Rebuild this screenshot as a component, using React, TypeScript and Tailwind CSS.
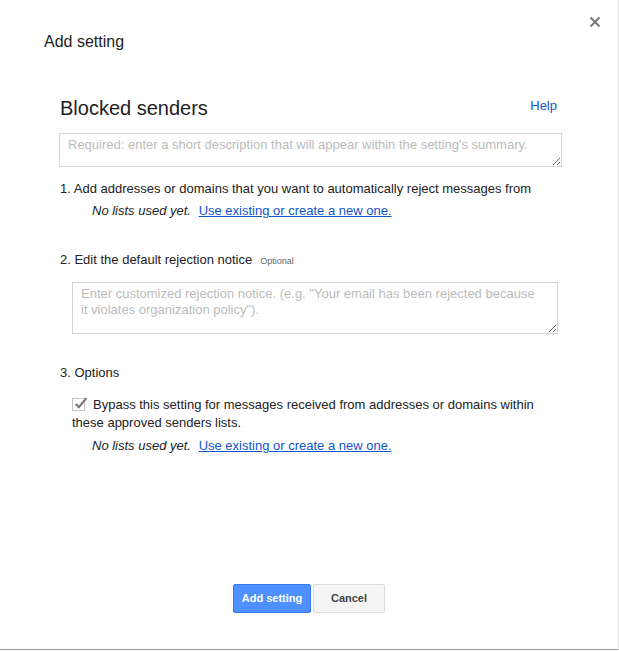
const ListPicker = () => (
  <div className="pl-[32px] text-[13px] leading-4 mt-[6px]">
    <span className="italic text-[#222]">No lists used yet.</span>{' '}
    <a href="#" className="ml-[4px] text-[#1155cc] underline">
      Use existing or create a new one.
    </a>
  </div>
);

export default function App() {
  return (
    <div className="w-[619px] h-[650px] bg-white border-r border-[#e3e3e3] border-b border-b-[#999] flex flex-col font-['Liberation_Sans',Arial,sans-serif] text-[#222]">
      <div className="relative">
        <h1 className="pt-[32px] pl-[44px] text-[16px] leading-5 text-[#222]">Add setting</h1>
        <button className="absolute right-[17px] top-[16px] w-[12px] h-[12px]" aria-label="Close">
          <svg viewBox="0 0 12 12" width="12" height="12">
            <path d="M1.5 1.5 L10.5 10.5 M10.5 1.5 L1.5 10.5" stroke="#777" strokeWidth="2" />
          </svg>
        </button>
      </div>

      <div className="ml-[59px] w-[503px] mt-[44px]">
        <div className="flex items-start justify-between pl-[1px] pr-[5px]">
          <h2 className="text-[20px] leading-6 text-[#222]">Blocked senders</h2>
          <a href="#" className="text-[13px] leading-4 mt-[2px] text-[#1155cc]">Help</a>
        </div>
        <textarea
          className="mt-[13px] block w-[503px] h-[34px] border border-[#d4d4d4] px-[8px] py-[3px] text-[13px] leading-4 placeholder:text-[#bbb] outline-none"
          placeholder="Required: enter a short description that will appear within the setting's summary."
        />

        <div className="pl-[1px] mt-[14px]">
          <div className="text-[13px] leading-4">1. Add addresses or domains that you want to automatically reject messages from</div>
          <ListPicker />

          <div className="text-[13px] leading-4 mt-[33px] flex items-baseline">
            <span>2. Edit the default rejection notice</span>
            <span className="ml-[8px] text-[9px] text-[#666]">Optional</span>
          </div>
          <textarea
            className="ml-[12px] mt-[13px] block w-[486px] h-[52px] border border-[#d4d4d4] pl-[8px] pr-[16px] py-[3px] text-[13px] leading-4 placeholder:text-[#bbb] outline-none"
            placeholder={'Enter customized rejection notice. (e.g. "Your email has been rejected because it violates organization policy").'}
          />

          <div className="text-[13px] leading-4 mt-[31px]">3. Options</div>
          <div className="ml-[12px] mt-[15px] text-[13px] leading-[18px] w-[475px]">
            <span className="inline-flex align-[-2px] w-[13px] h-[13px] border border-[#c6c6c6] bg-white mr-[8px] relative">
              <svg viewBox="0 0 14 14" width="15" height="15" className="absolute left-[0px] top-[-3px]">
                <path d="M2.5 7.5 L5.5 10.5 L12.5 2" stroke="#777" strokeWidth="2" fill="none" />
              </svg>
            </span>
            Bypass this setting for messages received from addresses or domains within these approved senders lists.
          </div>
          <div className="mt-[4px]">
            <ListPicker />
          </div>
        </div>
      </div>

      <div className="mt-auto mb-[36px] flex justify-center gap-[2px]">
        <button className="w-[78px] h-[29px] rounded-[2px] border border-[#3079ed] bg-[#4d90fe] text-white text-[11px] font-bold">
          Add setting
        </button>
        <button className="w-[72px] h-[29px] rounded-[2px] border border-[#dcdcdc] bg-[#f5f5f5] text-[#444] text-[11px] font-bold">
          Cancel
        </button>
      </div>
    </div>
  );
}
